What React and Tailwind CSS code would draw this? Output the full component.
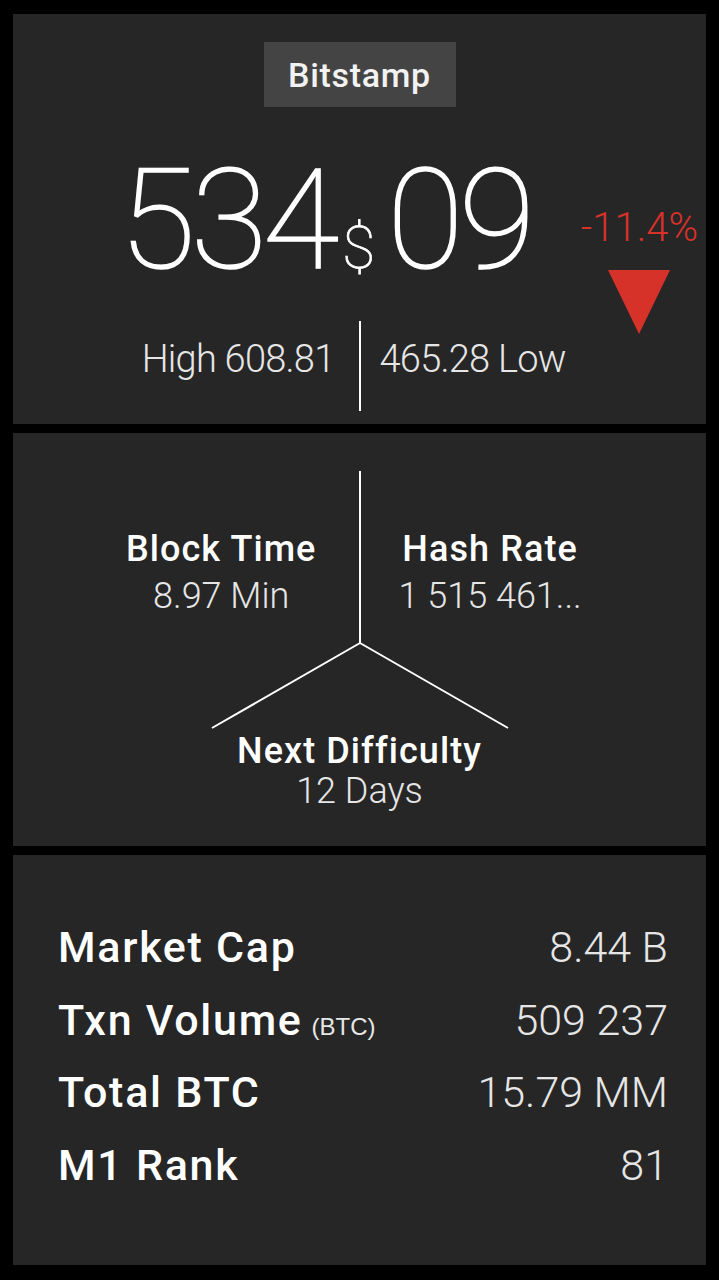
import React from 'react';

const FONT = { fontFamily: 'Roboto, "Liberation Sans", sans-serif' };

function PricePanel() {
  return (
    <section className="h-[410px] bg-[#262626] flex flex-col items-center">
      {/* Exchange label */}
      <div className="mt-[28px] w-[192px] h-[65px] bg-[#444444] flex items-center justify-center text-[34px] font-medium text-[#f2f2f2] leading-none tracking-[0.02em]">
        Bitstamp
      </div>

      {/* Price and change */}
      <div className="mt-[43px] w-full h-[140px] flex items-start">
        <div className="ml-[106px] flex items-baseline text-white font-thin leading-none [-webkit-text-stroke:1.5px_#fff]">
          <span className="text-[140px] tracking-[-0.035em]">534</span>
          <span className="text-[60px] ml-[8px] mr-[12px] [-webkit-text-stroke:0.8px_#fff]">$</span>
          <span className="text-[140px] tracking-[-0.035em]">09</span>
        </div>
        <div className="ml-auto mr-[8px] mt-[58px] flex flex-col items-center">
          <span className="text-[40px] font-light leading-none text-[#d7322a]">-11.4%</span>
          <svg className="mt-[22px]" width="62" height="64" viewBox="0 0 62 64">
            <polygon points="0,0 62,0 31,64" fill="#d7322a" />
          </svg>
        </div>
      </div>

      {/* High / Low */}
      <div className="mt-[31px] w-full grid grid-cols-[1fr_auto_1fr] items-center text-[38px] font-light text-[#e6e6e6] leading-none tracking-[-0.02em]">
        <span className="text-right pr-[24px] mb-[14px]">High 608.81</span>
        <div className="w-[2px] h-[90px] bg-white" />
        <span className="pl-[19px] mb-[14px]">465.28 Low</span>
      </div>
    </section>
  );
}

function NetworkPanel() {
  return (
    <section className="h-[413px] bg-[#262626] flex flex-col items-center">
      <div className="mt-[38px] w-full flex justify-center items-start">
        <div className="flex-1 flex justify-end">
          <div className="mt-[55px] mr-[42px] text-center text-[36px] leading-[47px]">
            <div className="font-medium text-white tracking-[0.03em]">Block Time</div>
            <div className="font-light text-[#e6e6e6]">8.97 Min</div>
          </div>
        </div>
        <div className="w-[2px] h-[172px] bg-white" />
        <div className="flex-1 flex justify-start">
          <div className="mt-[55px] ml-[38px] text-center text-[36px] leading-[47px]">
            <div className="font-medium text-white tracking-[0.03em]">Hash Rate</div>
            <div className="font-light text-[#e6e6e6]">1 515 461...</div>
          </div>
        </div>
      </div>
      <svg width="298" height="86" viewBox="0 0 298 86" className="overflow-visible">
        <path d="M149 0 L1 85 M149 0 L297 85" stroke="white" strokeWidth="2" fill="none" />
      </svg>
      <div className="mt-[2px] text-center text-[36px] leading-[40px]">
        <div className="font-medium text-white tracking-[0.03em]">Next Difficulty</div>
        <div className="font-light text-[#e6e6e6]">12 Days</div>
      </div>
    </section>
  );
}

const STATS = [
  { label: 'Market Cap', value: '8.44 B' },
  { label: 'Txn Volume', unit: '(BTC)', value: '509 237' },
  { label: 'Total BTC', value: '15.79 MM' },
  { label: 'M1 Rank', value: '81' },
];

function StatsPanel() {
  return (
    <section className="h-[410px] bg-[#262626] pt-[56px] pl-[45px] pr-[38px]">
      {STATS.map((s) => (
        <div key={s.label} className="h-[72.5px] flex items-baseline justify-between text-[43px] leading-[72px]">
          <div className="flex items-baseline">
            <span className="font-medium text-white tracking-[0.04em]">{s.label}</span>
            {s.unit && (
              <span
                className="ml-[9px] text-[24px] leading-none text-[#e6e6e6]"
                style={{ fontFamily: '"Liberation Sans", Arial, sans-serif' }}
              >
                {s.unit}
              </span>
            )}
          </div>
          <span className="font-light text-[#e6e6e6]">{s.value}</span>
        </div>
      ))}
    </section>
  );
}

export default function App() {
  return (
    <div className="min-h-screen bg-black px-[13px] pt-[14px] pb-[15px] flex flex-col gap-[9px]" style={FONT}>
      <PricePanel />
      <NetworkPanel />
      <StatsPanel />
    </div>
  );
}
